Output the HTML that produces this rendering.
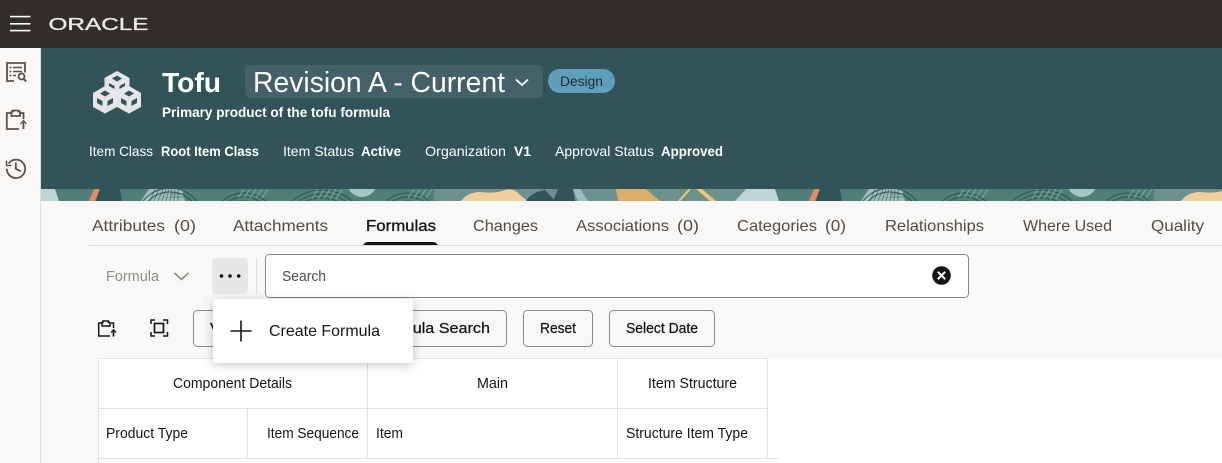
<!DOCTYPE html>
<html lang="en">
<head>
<meta charset="utf-8">
<title>Tofu</title>
<style>
html,body{margin:0;padding:0;width:1222px;height:463px;overflow:hidden;background:#f9f8f6}
svg{display:block;position:absolute;left:0;top:0}
text{font-family:"Liberation Sans",Arial,sans-serif;white-space:pre}
.w{fill:#fff}
.t{font-size:16px;fill:#514c48}
.c{font-size:14.5px;fill:#161513}
.b{font-size:14.5px;fill:#161513;stroke:#161513;stroke-width:.25}
</style>
</head>
<body>
<svg width="1222" height="463" viewBox="0 0 1222 463" xmlns="http://www.w3.org/2000/svg">
<defs>
<clipPath id="strip"><rect x="41" y="189" width="1181" height="12"/></clipPath>
<filter id="sh" x="-20%" y="-30%" width="140%" height="170%"><feDropShadow dx="0" dy="2" stdDeviation="5" flood-color="#000" flood-opacity=".22"/></filter>
<g id="period">
<rect x="0" y="189" width="720" height="12" fill="#4f7f78"/>
<rect x="0" y="189" width="27" height="12" fill="#6a918e"/>
<polygon points="26,189 55,189 59,201 15,201" fill="#bcd6d6"/>
<polygon points="89,201 94,189 100,189 95,201" fill="#e28c5c"/>
<polygon points="96,201 100,189 120,189 122,201" fill="#325358"/>
<polygon points="141,201 149,189 182,189 185,201" fill="#9cbfbd"/>
<g stroke="#4a6f70" stroke-width=".8" fill="none">
<path d="M150 201l5-12M154 201l5-12M158 201l5-12M162 201l4-12M166 201l3-12M170 201l2-12M174 201l1-12M178 201v-12M170 194h14M170 197h14"/>
</g>
<g stroke="#2f5459" stroke-width="1" fill="none">
<circle cx="170" cy="222" r="34"/><circle cx="170" cy="222" r="30"/>
<circle cx="244" cy="226" r="33"/><circle cx="244" cy="226" r="29"/><circle cx="244" cy="226" r="25"/>
<circle cx="322" cy="236" r="46"/><circle cx="322" cy="236" r="42"/><circle cx="322" cy="236" r="38"/>
<circle cx="408" cy="226" r="33"/><circle cx="408" cy="226" r="29"/><circle cx="408" cy="226" r="25"/>
</g>
<g stroke="#8fb2ae" stroke-width=".8" fill="none">
<path d="M244 189l-6 9M250 189l-6 9M256 189l-6 9M262 189l-6 9M268 189l-6 9M318 189l-6 10M324 189l-6 10M330 189l-6 10M336 189l-6 10M342 189l-6 10M414 189l-6 9M420 189l-6 9M426 189l-6 9M432 189l-6 9"/>
</g>
<circle cx="362" cy="182" r="15" fill="#a5c6c4"/>
<rect x="434" y="189" width="186" height="12" fill="#6a918e"/>
<path d="M461 201Q468 192 480 192Q495 194 505 190Q513 188 518 193Q523 198 528 201Z" fill="#efcf9b"/>
<path d="M526 201Q532 192 545 190L555 201Z" fill="#325358"/>
<polygon points="553,201 558,189 573,189 575,201" fill="#325358"/>
<polygon points="573,189 580,189 588,201 578,201" fill="#9cbfbd"/>
<rect x="616" y="189" width="104" height="12" fill="#6a918e"/>
<polygon points="616,189 646,189 660,201 618,201" fill="#dcae67"/>
<path d="M679 201l11-12" stroke="#f4c56f" stroke-width="2" fill="none"/>
<path d="M696 189h6l14 12h-6z" fill="#f4c56f"/>
</g>
</defs>

<!-- app bar -->
<rect x="0" y="0" width="1222" height="48" fill="#312d2a"/>
<rect x="10" y="15.8" width="20.5" height="1.6" fill="#fff"/>
<rect x="10" y="23" width="20.5" height="1.6" fill="#fff"/>
<rect x="10" y="29.8" width="20.5" height="1.6" fill="#fff"/>
<text x="48.5" y="30" font-size="17.500" fill="#ece9e6" stroke="#ece9e6" stroke-width=".35" textLength="100" lengthAdjust="spacingAndGlyphs">ORACLE</text>

<!-- side rail -->
<rect x="0" y="48" width="41" height="415" fill="#f9f8f6"/>
<rect x="40" y="48" width="1" height="415" fill="#dedcda"/>
<g fill="none" stroke="#5d504b" stroke-width="1.8">
<path d="M14 81H7V63h18v9.5"/>
<path d="M13 67.5h9M13 71.5h9M13 75.5h3M9.5 67.5h2M9.5 71.5h2M9.5 75.5h2" stroke-width="1.500"/>
<circle cx="21.5" cy="76.5" r="3"/><path d="M23.8 79l2.4 2.6" stroke-width="2"/>
<path d="M11 113H6.8v16H19M20 113h3.5v6"/>
<path d="M11.5 116v-4.5h1.5v-1h5.5v1h1.5v4.500z"/>
<path d="M23.500 129v-7" stroke-width="1.800"/>
<path d="M20.500 124l3-3.500 3 3.500" stroke-width="1.300"/>
<path d="M8.500 163.500a9.200 9.200 0 1 1-1.700 5.300"/>
<path d="M15.800 162.500v6.300l5 2.500"/>
<path d="M6.500 160.500v5h5" stroke-width="1.500"/>
</g>

<!-- banner -->
<rect x="41" y="48" width="1181" height="141" fill="#325358"/>
<g clip-path="url(#strip)">
<use href="#period" x="0"/><use href="#period" x="720"/>
</g>

<!-- cubes icon -->
<g fill="#e6e6e9">
<polygon points="117,71 129.500,78 129.500,92 117,99 104.500,92 104.500,78"/>
<polygon points="105,86 117,93 117,107 105,113.500 93,107 93,93"/>
<polygon points="129,86 141,93 141,107 129,113.500 117,107 117,93"/>
</g>
<g fill="#325358">
<polygon points="117,75.500 122,78.500 117,81.500 112,78.500"/>
<polygon points="109,83 114.500,86 114.500,89 109,86"/>
<polygon points="125,83 119.500,86 119.500,89 125,86"/>
<polygon points="105,90.500 110,93.500 105,96.500 100,93.500"/>
<polygon points="129,90.500 134,93.500 129,96.500 124,93.500"/>
<polygon points="97,98 102.500,101 102.500,106 97,103"/>
<polygon points="113,98 107.500,101 107.500,106 113,103"/>
<polygon points="121,98 126.500,101 126.500,106 121,103"/>
<polygon points="137,98 131.500,101 131.500,106 137,103"/>
</g>

<text x="162" y="92" font-size="28" font-weight="700" class="w" textLength="59" lengthAdjust="spacingAndGlyphs">Tofu</text>
<rect x="245" y="65" width="298" height="33" rx="5" fill="#436166"/>
<text x="253" y="92" font-size="29" class="w" textLength="252" lengthAdjust="spacingAndGlyphs">Revision A - Current</text>
<path d="M516 79.500l6 5.500 6-5.500" fill="none" stroke="#fff" stroke-width="1.800"/>
<rect x="548" y="69" width="67" height="24" rx="12" fill="#5f9fbb"/>
<text x="560" y="86" font-size="14" fill="#1c2b30" textLength="43" lengthAdjust="spacingAndGlyphs">Design</text>
<text x="162" y="117" font-size="14" font-weight="700" class="w" textLength="228" lengthAdjust="spacingAndGlyphs">Primary product of the tofu formula</text>
<g font-size="14" class="w">
<text x="89" y="156" textLength="64" lengthAdjust="spacingAndGlyphs">Item Class</text>
<text x="161" y="156" font-weight="700" textLength="98" lengthAdjust="spacingAndGlyphs">Root Item Class</text>
<text x="283" y="156" textLength="71" lengthAdjust="spacingAndGlyphs">Item Status</text>
<text x="361" y="156" font-weight="700" textLength="40" lengthAdjust="spacingAndGlyphs">Active</text>
<text x="425" y="156" textLength="81" lengthAdjust="spacingAndGlyphs">Organization</text>
<text x="514" y="156" font-weight="700" textLength="17" lengthAdjust="spacingAndGlyphs">V1</text>
<text x="555" y="156" textLength="99" lengthAdjust="spacingAndGlyphs">Approval Status</text>
<text x="661" y="156" font-weight="700" textLength="62" lengthAdjust="spacingAndGlyphs">Approved</text>
</g>

<!-- tabs -->
<rect x="89" y="245" width="1133" height="1" fill="#dedcda"/>
<text x="92" y="231" class="t" textLength="73" lengthAdjust="spacingAndGlyphs">Attributes</text>
<text x="174" y="231" class="t" textLength="22" lengthAdjust="spacingAndGlyphs">(0)</text>
<text x="233" y="231" class="t" textLength="95" lengthAdjust="spacingAndGlyphs">Attachments</text>
<text x="366" y="231" class="t" style="fill:#161513;stroke:#161513;stroke-width:.35" textLength="70" lengthAdjust="spacingAndGlyphs">Formulas</text>
<path d="M363 245q2-3 5-3h65q3 0 5 3z" fill="#161513"/>
<text x="473" y="231" class="t" textLength="65" lengthAdjust="spacingAndGlyphs">Changes</text>
<text x="576" y="231" class="t" textLength="93" lengthAdjust="spacingAndGlyphs">Associations</text>
<text x="677" y="231" class="t" textLength="22" lengthAdjust="spacingAndGlyphs">(0)</text>
<text x="737" y="231" class="t" textLength="80" lengthAdjust="spacingAndGlyphs">Categories</text>
<text x="825" y="231" class="t" textLength="21" lengthAdjust="spacingAndGlyphs">(0)</text>
<text x="885" y="231" class="t" textLength="99" lengthAdjust="spacingAndGlyphs">Relationships</text>
<text x="1023" y="231" class="t" textLength="89" lengthAdjust="spacingAndGlyphs">Where Used</text>
<text x="1151" y="231" class="t" textLength="53" lengthAdjust="spacingAndGlyphs">Quality</text>

<!-- search row -->
<text x="106" y="281" font-size="14.500" fill="#8f8c89" textLength="53" lengthAdjust="spacingAndGlyphs">Formula</text>
<path d="M174.500 273l7 6.500 7-6.500" fill="none" stroke="#8f8c89" stroke-width="1.700"/>
<rect x="212" y="258" width="36" height="36" rx="4" fill="#e9e7e5"/>
<circle cx="221.500" cy="276" r="1.800" fill="#161513"/><circle cx="230" cy="276" r="1.800" fill="#161513"/><circle cx="238.700" cy="276" r="1.800" fill="#161513"/>
<rect x="256" y="258" width="1" height="36" fill="#dedcda"/>
<rect x="265.500" y="254.500" width="703" height="43" rx="4" fill="#fff" stroke="#8c8a88"/>
<text x="282" y="281" font-size="14.500" fill="#514c48" textLength="44" lengthAdjust="spacingAndGlyphs">Search</text>
<circle cx="941.500" cy="275.500" r="9.300" fill="#161513"/>
<path d="M937.800 271.800l7.400 7.400M945.200 271.800l-7.400 7.400" stroke="#fff" stroke-width="2"/>

<!-- toolbar -->
<g fill="none" stroke="#161513" stroke-width="1.500">
<path d="M102 323h-3.300v13H110M111 323h2.500v5"/>
<path d="M102 326v-3.500h1v-1.500h5.500v1.500h1.500V326z"/>
<path d="M113.500 336.500v-6" stroke-width="1.800"/>
<path d="M111 332.500l2.500-3 2.500 3" stroke-width="1.200"/>
<rect x="154.500" y="323.500" width="9" height="9" stroke-width="1.700"/>
<path d="M151 324v-4h4M163 320h4.500v4M167.500 332v4H163M155 336h-4v-4"/>
</g>
<rect x="193.500" y="310.500" width="80" height="36" rx="4" fill="#f9f8f6" stroke="#8c8a88"/>
<text x="210" y="333" class="b" textLength="34" lengthAdjust="spacingAndGlyphs">View</text>
<rect x="358.500" y="310.500" width="148" height="36" rx="4" fill="#f9f8f6" stroke="#8c8a88"/>
<text x="375" y="333" class="b" textLength="115" lengthAdjust="spacingAndGlyphs">Formula Search</text>
<rect x="523.500" y="310.500" width="69" height="36" rx="4" fill="#f9f8f6" stroke="#8c8a88"/>
<text x="540" y="333" class="b" textLength="36" lengthAdjust="spacingAndGlyphs">Reset</text>
<rect x="609.500" y="310.500" width="105" height="36" rx="4" fill="#f9f8f6" stroke="#8c8a88"/>
<text x="626" y="333" class="b" textLength="72" lengthAdjust="spacingAndGlyphs">Select Date</text>

<!-- table -->
<rect x="98" y="358" width="1124" height="105" fill="#fff"/>
<g fill="#e3e2e0">
<rect x="98" y="358" width="670" height="1"/>
<rect x="98" y="408" width="670" height="1"/>
<rect x="98" y="458" width="680" height="1"/>
<rect x="98" y="358" width="1" height="105"/>
<rect x="247" y="408" width="1" height="50"/>
<rect x="367" y="358" width="1" height="100"/>
<rect x="617" y="358" width="1" height="100"/>
<rect x="767" y="358" width="1" height="100"/>
</g>
<text x="173" y="388" class="c" textLength="119" lengthAdjust="spacingAndGlyphs">Component Details</text>
<text x="477" y="388" class="c" textLength="31" lengthAdjust="spacingAndGlyphs">Main</text>
<text x="648" y="388" class="c" textLength="89" lengthAdjust="spacingAndGlyphs">Item Structure</text>
<text x="106" y="438" class="c" textLength="82" lengthAdjust="spacingAndGlyphs">Product Type</text>
<text x="267" y="438" class="c" textLength="92" lengthAdjust="spacingAndGlyphs">Item Sequence</text>
<text x="376" y="438" class="c" textLength="27" lengthAdjust="spacingAndGlyphs">Item</text>
<text x="626" y="438" class="c" textLength="122" lengthAdjust="spacingAndGlyphs">Structure Item Type</text>

<!-- popup menu -->
<rect x="213" y="299" width="200" height="64" rx="3" fill="#fff" filter="url(#sh)"/>
<path d="M241 320.500v21M230.500 331h21" stroke="#161513" stroke-width="1.600" fill="none"/>
<text x="269" y="336" font-size="16" fill="#161513" textLength="111" lengthAdjust="spacingAndGlyphs">Create Formula</text>
</svg>
</body>
</html>
